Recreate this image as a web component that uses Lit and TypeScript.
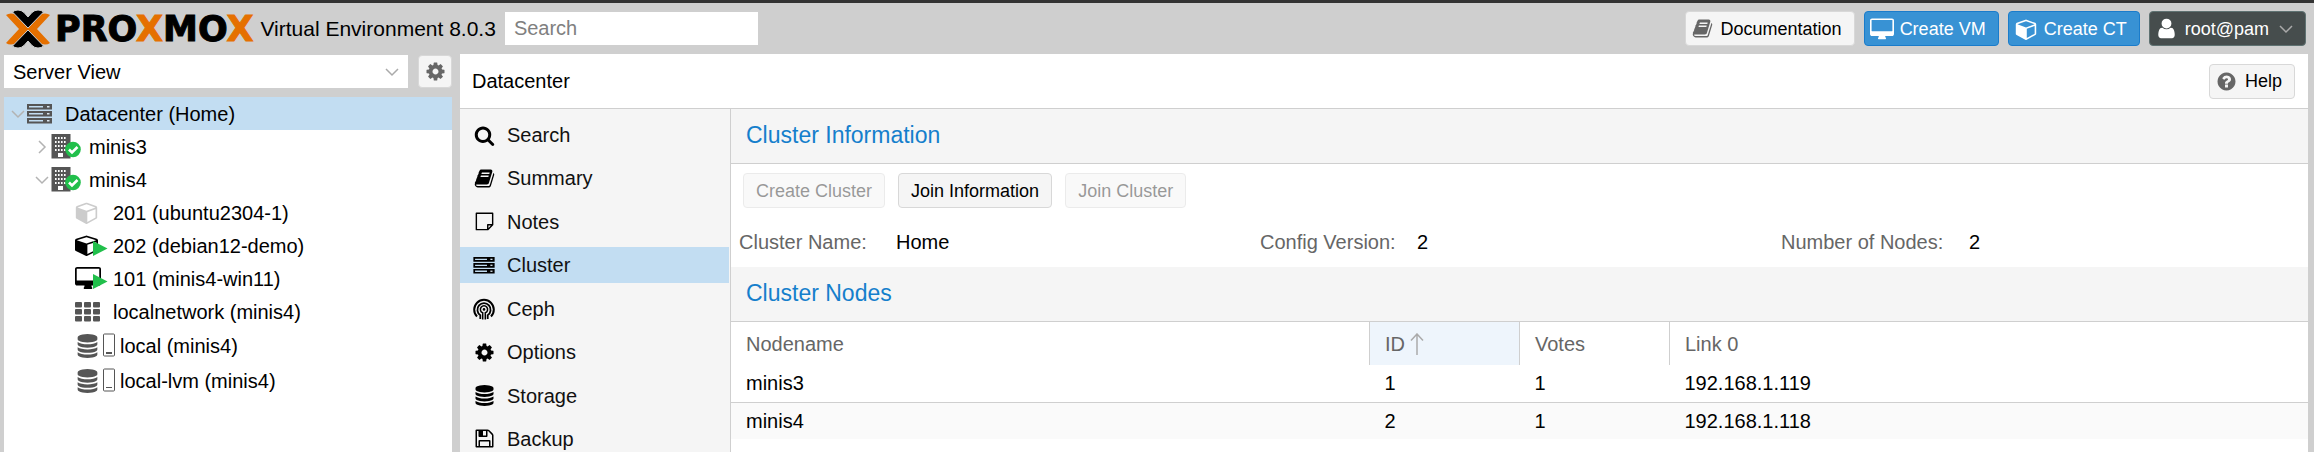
import { LitElement, html, svg, css, nothing, TemplateResult } from "lit";
import { customElement, state } from "lit/decorators.js";
import { classMap } from "lit/directives/class-map.js";

const glyphs = {
  cog: svg`<path d="M1152 896q0-106-75-181t-181-75-181 75-75 181 75 181 181 75 181-75 75-181zm512-109v222q0 12-8 23t-20 13l-185 28q-19 54-39 91 35 50 107 138 10 12 10 25t-9 23q-27 37-99 108t-94 71q-12 0-26-9l-138-108q-44 23-91 38-16 136-29 186-7 28-36 28h-222q-14 0-24.500-8.500t-11.500-21.500l-28-184q-49-16-90-37l-141 107q-10 9-25 9-14 0-25-11-126-114-165-168-7-10-7-23 0-12 8-23 15-21 51-66.500t54-70.500q-27-50-41-99l-183-27q-13-2-21-12.500t-8-23.500v-222q0-12 8-23t19-13l186-28q14-46 39-92-40-57-107-138-10-12-10-24 0-10 9-23 26-36 98.500-107.500t94.500-71.500q13 0 26 10l138 107q44-23 91-38 16-136 29-186 7-28 36-28h222q14 0 24.500 8.500t11.500 21.500l28 184q49 16 90 37l142-107q9-9 24-9 13 0 25 10 129 119 165 170 7 8 7 22 0 12-8 23-15 21-51 66.500t-54 70.500q26 50 41 98l183 28q13 2 21 12.500t8 23.500z"/>`,
  search: svg`<path d="M1216 832q0-185-131.500-316.500t-316.500-131.500-316.500 131.500-131.500 316.500 131.500 316.500 316.500 131.500 316.500-131.500 131.500-316.500zm512 832q0 52-38 90t-90 38q-54 0-90-38l-343-342q-179 124-399 124-143 0-273.500-55.500t-225-150-150-225-55.500-273.500 55.500-273.500 150-225 225-150 273.500-55.500 273.500 55.500 225 150 150 225 55.500 273.500q0 220-124 399l343 343q37 37 37 90z"/>`,
  book: svg`<path d="M1703 478q40 57 18 129l-275 906q-19 64-76.500 107.500t-122.500 43.500h-923q-77 0-148.500-53.500t-99.500-131.500q-24-67-2-127 0-4 3-27t4-37q1-8-3-21.500t-3-19.500q2-11 8-21t16.500-23.500 16.500-23.500q23-38 45-91.500t30-91.500q3-10 .5-30t-.5-28q3-11 17-28t17-23q21-36 42-92t25-90q1-9-2.500-32t.5-28q4-13 22-30.500t22-22.500q19-26 42.500-84.500t27.500-96.500q1-8-3-25.500t-2-26.500q2-8 9-18t18-23 17-21q8-12 16.500-30.500t15-35 16-36 19.500-32 26.500-23.500 36-11.500 47.500 5.500l-1 3q38-9 51-9h761q74 0 114 56t18 130l-274 906q-36 119-71.500 153.500t-128.500 34.500h-869q-27 0-38 15-11 16-1 43 24 70 144 70h923q29 0 56-15.500t35-41.500l300-987q7-22 5-57 38 15 59 43zm-1064 2q-4 13 2 22.500t20 9.500h608q13 0 25.500-9.500t16.500-22.500l21-64q4-13-2-22.500t-20-9.500h-608q-13 0-25.500 9.500t-16.500 22.500zm-83 256q-4 13 2 22.500t20 9.500h608q13 0 25.500-9.500t16.500-22.500l21-64q4-13-2-22.500t-20-9.500h-608q-13 0-25.500 9.500t-16.500 22.500z"/>`,
  help: svg`<path d="M1024 1376v-192q0-14-9-23t-23-9h-192q-14 0-23 9t-9 23v192q0 14 9 23t23 9h192q14 0 23-9t9-23zm256-672q0-88-55.500-163t-138.500-116-170-41q-243 0-371 213-15 24 8 42l132 100q7 6 19 6 16 0 25-12 53-68 86-92 34-24 86-24 48 0 85.500 26t37.500 59q0 38-20 61t-68 45q-63 28-115.500 86.500t-52.500 125.500v36q0 14 9 23t23 9h192q14 0 23-9t9-23q0-19 21.500-49.500t54.500-49.500q32-18 49-28.500t46-35 44.500-48 28-60.500 12.500-81zm384 192q0 209-103 385.500t-279.500 279.500-385.500 103-385.500-103-279.500-279.500-103-385.500 103-385.500 279.500-279.500 385.500-103 385.500 103 279.500 279.500 103 385.500z"/>`,
  user: svg`<path d="M1536 1399q0 109-62.500 187t-150.500 78h-854q-88 0-150.500-78t-62.500-187q0-85 8.500-160.500t31.500-152 58.500-131 94-89 134.500-34.500q131 128 313 128t313-128q76 0 134.500 34.500t94 89 58.500 131 31.500 152 8.500 160.500zm-256-887q0 159-112.500 271.500t-271.500 112.500-271.500-112.500-112.500-271.500 112.500-271.500 271.500-112.500 271.500 112.500 112.500 271.500z"/>`,
  database: svg`<path d="M896 768q237 0 443-43t325-127v170q0 69-103 128t-280 93.500-385 34.500-385-34.500-280-93.500-103-128v-170q119 84 325 127t443 43zm0 768q237 0 443-43t325-127v170q0 69-103 128t-280 93.500-385 34.500-385-34.500-280-93.500-103-128v-170q119 84 325 127t443 43zm0-384q237 0 443-43t325-127v170q0 69-103 128t-280 93.500-385 34.500-385-34.500-280-93.500-103-128v-170q119 84 325 127t443 43zm0-1152q208 0 385 34.500t280 93.500 103 128v128q0 69-103 128t-280 93.500-385 34.500-385-34.500-280-93.500-103-128v-128q0-69 103-128t280-93.500 385-34.500z"/>`,
  floppy: svg`<path d="M512 1536h768v-384h-768v384zm896 0h128v-896q0-14-10-38.500t-20-34.500l-281-281q-10-10-34-20t-39-10v416q0 40-28 68t-68 28h-576q-40 0-68-28t-28-68v-416h-128v1280h128v-416q0-40 28-68t68-28h832q40 0 68 28t28 68v416zm-384-928v-320q0-13-9.500-22.500t-22.500-9.500h-192q-13 0-22.500 9.500t-9.500 22.500v320q0 13 9.500 22.500t22.500 9.500h192q13 0 22.500-9.500t9.500-22.500zm640 32v928q0 40-28 68t-68 28h-1344q-40 0-68-28t-28-68v-1344q0-40 28-68t68-28h928q40 0 88 20t76 48l280 280q28 28 48 76t20 88z"/>`,
  note: svg`<path fill="none" stroke="currentColor" stroke-width="120" stroke-linejoin="round" d="M200 190h1392v980l-420 420h-972zM1592 1170h-420v420"/>`,
};

const cubePath = svg`<path d="M896 1629l640-349v-636l-640 233v752zm-64-865l698-254-698-254-698 254zm832-252v768q0 35-18 65t-49 47l-704 384q-28 16-61 16t-61-16l-704-384q-31-17-49-47t-18-65v-768q0-40 23-73t61-47l704-256q22-8 44-8t44 8l704 256q38 14 61 47t23 73z"/>`;
const desktopPath = svg`<path d="M1728 992v-832q0-13-9.500-22.500t-22.500-9.500h-1600q-13 0-22.500 9.500t-9.500 22.500v832q0 13 9.500 22.500t22.500 9.500h1600q13 0 22.500-9.500t9.500-22.500zm128-832v1088q0 66-47 113t-113 47h-544q0 37 16 77.500t32 71 16 43.500q0 26-19 45t-45 19h-512q-26 0-45-19t-19-45q0-14 16-44t32-70 16-78h-544q-66 0-113-47t-47-113v-1088q0-66 47-113t113-47h1600q66 0 113 47t47 113z"/>`;

const glyph = (name: keyof typeof glyphs, size = 21) =>
  html`<svg class="icon" width=${size} height=${size} viewBox="0 0 1792 1792" aria-hidden="true">${glyphs[name]}</svg>`;

const cube = (w = 23) =>
  html`<svg class="icon" width=${w} height=${w} viewBox="0 0 1664 1792" aria-hidden="true">${cubePath}</svg>`;

const desktop = () =>
  html`<svg class="icon" width="24" height="22" viewBox="-64 0 1920 1700" aria-hidden="true">${desktopPath}</svg>`;

const server = (w: number, h: number) => html`
  <svg class="icon" width=${w} height=${h} viewBox="0 0 25 20" aria-hidden="true">
    ${[0, 7, 14].map(
      (y) => svg`
        <path fill-rule="evenodd" d="M0 ${y}h25v5.500h-25zM2 ${y + 2}v1.500h14v-1.500z"/>
        <rect x="20" y=${y + 2} width="2.500" height="1.500" fill="#d9e6f0"/>`
    )}
  </svg>`;

const ceph = () => html`
  <svg class="icon" width="22" height="22" viewBox="0 0 22 22" aria-hidden="true">
    <g fill="none" stroke="currentColor">
      <path stroke-width="2" d="M4 18.500A9.800 9.800 0 1 1 18 18.500"/>
      <path stroke-width="1.800" d="M7.300 21v-3.800a6.600 6.600 0 1 1 7.400 0v3.800"/>
      <path stroke-width="1.500" d="M9.700 21.500v-6.700a3.600 3.600 0 1 1 2.600 0v6.700"/>
    </g>
    <circle cx="11" cy="11.400" r="1.300"/>
  </svg>`;

const building = () => html`
  <svg class="icon" width="30" height="25" viewBox="0 0 30 25" aria-hidden="true">
    <rect x="0.500" width="19" height="24.500"/>
    ${[3, 7, 11, 15].map((y) =>
      [4, 7, 10, 13].map((x) => svg`<rect x=${x} y=${y} width="1.600" height="2" fill="#fff"/>`)
    )}
    <rect x="7" y="19" width="5" height="4" fill="#fff"/>
    <circle cx="22" cy="15.500" r="7.800" fill="#21bf4b"/>
    <path d="M18 15.500l3 3 5.500-5.500" fill="none" stroke="#fff" stroke-width="2.600"/>
  </svg>`;

const running = (shape: unknown, box: string, w: number, h: number) => html`
  <svg class="icon running" width="34" height="24" viewBox="0 0 34 24" aria-hidden="true">
    <svg width=${w} height=${h} viewBox=${box} preserveAspectRatio="none">${shape}</svg>
    <path d="M18 7l14.500 7.500-14.500 7.500z" fill="#21bf4b"/>
  </svg>`;

const grid = () => html`
  <svg class="icon" width="25" height="20" viewBox="0 0 25 20" aria-hidden="true">
    ${[0, 7, 14].map((y) =>
      [0, 9, 18].map((x) => svg`<rect x=${x} y=${y} width="7" height="5.500" rx="1"/>`)
    )}
  </svg>`;

const drive = (thick: boolean) => html`
  <svg class="icon" width="40" height="26" viewBox="0 0 40 26" aria-hidden="true">
    <svg x="1" y="1" width="23" height="24" viewBox="0 0 1792 1792" preserveAspectRatio="none">${glyphs.database}</svg>
    <rect x="28.500" y="1" width="11" height="22" rx="1" fill="#fff" stroke="currentColor"/>
    <rect x="31" y="19" width="6" height=${thick ? 2 : 1}/>
  </svg>`;

const chevron = (dir: "down" | "right") => html`
  <svg class="chevron" width="14" height="14" viewBox="0 0 14 14" aria-hidden="true">
    <path d=${dir === "down" ? "M1 4l6 6 6-6" : "M4 1l6 6-6 6"} fill="none" stroke="currentColor" stroke-width="1.500"/>
  </svg>`;

interface Node {
  level: number;
  label: string;
  icon: TemplateResult;
  open?: boolean;
  kind?: string;
}

const tree: Node[] = [
  { level: 0, label: "Datacenter (Home)", icon: server(25, 20), open: true },
  { level: 1, label: "minis3", icon: building(), open: false },
  { level: 1, label: "minis4", icon: building(), open: true },
  { level: 2, label: "201 (ubuntu2304-1)", icon: cube(), kind: "stopped" },
  { level: 2, label: "202 (debian12-demo)", icon: running(cubePath, "0 0 1664 1792", 23, 22), kind: "active" },
  { level: 2, label: "101 (minis4-win11)", icon: running(desktopPath, "-64 0 1920 1664", 26, 22), kind: "active" },
  { level: 2, label: "localnetwork (minis4)", icon: grid() },
  { level: 2, label: "local (minis4)", icon: drive(true), kind: "storage" },
  { level: 2, label: "local-lvm (minis4)", icon: drive(false), kind: "storage" },
];

const sections: [string, TemplateResult][] = [
  ["Search", glyph("search")],
  ["Summary", glyph("book")],
  ["Notes", glyph("note")],
  ["Cluster", server(22, 17)],
  ["Ceph", ceph()],
  ["Options", glyph("cog")],
  ["Storage", glyph("database")],
  ["Backup", glyph("floppy")],
];

const summary = [
  { label: "Cluster Name:", value: "Home", wide: false },
  { label: "Config Version:", value: "2", wide: false },
  { label: "Number of Nodes:", value: "2", wide: true },
];

const nodes = [
  ["minis3", "1", "1", "192.168.1.119"],
  ["minis4", "2", "1", "192.168.1.118"],
];

@customElement("app-root")
export class AppRoot extends LitElement {
  @state() private section = "Cluster";
  @state() private selected = "Datacenter (Home)";

  static styles = css`
    :host {
      display: flex;
      flex-direction: column;
      box-sizing: border-box;
      height: 100vh;
      overflow: hidden;
      border-top: 3px solid #333;
      background: #cfcfcf;
      color: #000;
      font: 20px/24px "Liberation Sans", Arial, sans-serif;
    }
    * { box-sizing: border-box; }
    h1, h2, ul, dl, dd { margin: 0; padding: 0; font-size: inherit; font-weight: normal; }
    ul { list-style: none; }
    button, input, select { font: inherit; color: inherit; margin: 0; border-radius: 0; }
    a { color: inherit; text-decoration: none; }
    .icon, .chevron { display: block; flex: none; fill: currentColor; }
    .running { overflow: visible; }

    .top {
      display: flex;
      align-items: center;
      flex: none;
      height: 51px;
      padding: 0 8px 0 6px;
    }
    .mark { display: block; margin-right: 5px; }
    .wordmark {
      font: bold 35px/40px "DejaVu Sans", sans-serif;
      -webkit-text-stroke: 1px currentColor;
    }
    .accent { color: #e57000; }
    .version { margin: 0 9px 0 7px; font-size: 21px; white-space: nowrap; }
    .search {
      width: 253px;
      height: 33px;
      padding: 0 9px;
      border: 0;
      background: #fff;
    }
    .search::placeholder { color: #808080; opacity: 1; }
    .actions { display: flex; gap: 9px; margin-left: auto; }

    .btn {
      display: flex;
      align-items: center;
      gap: 6px;
      height: 35px;
      padding: 0 12px 0 5px;
      border: 1px solid #d8d8d8;
      border-radius: 4px;
      background: #f5f5f5;
      font-size: 18px;
      white-space: nowrap;
    }
    .slot { display: flex; justify-content: center; width: 24px; color: #666; }
    .primary { background: #3892d4; border-color: #1a7ccb; color: #fff; }
    .dark { background: #464d4d; border-color: #5f7272; color: #fff; }
    .primary .slot, .dark .slot { color: #fff; }
    .dark .chevron { margin-left: 4px; color: #aaa; }
    .plain { padding: 0 12px; }
    .plain:disabled { opacity: 0.5; color: #333; }

    .body { display: flex; flex: 1; min-height: 0; gap: 8px; padding: 0 6px 0 4px; }
    .left { display: flex; flex-direction: column; width: 448px; padding-top: 1px; }
    .view { display: flex; gap: 10px; margin-bottom: 9px; }
    .picker { display: grid; flex: 1; align-items: center; }
    .picker > * { grid-area: 1 / 1; }
    .picker select {
      appearance: none;
      width: 100%;
      height: 33px;
      padding: 0 9px;
      border: 0;
      background: #fff;
    }
    .picker .chevron { justify-self: end; margin-right: 9px; color: #aaa; pointer-events: none; }
    .gear { justify-content: center; width: 34px; height: 33px; padding: 0; color: #666; }
    .tree { flex: 1; background: #fff; }
    .row { display: flex; align-items: center; height: 33px; padding-left: 7px; cursor: default; }
    .storage { height: 35px; }
    .on { background: #c2ddf2; }
    .indent { width: 24px; }
    .twisty { width: 16px; color: #b3b3b3; }
    .pic { width: 38px; color: #555; }
    .storage .pic { width: 45px; }
    .stopped .pic { color: #ccc; }
    .active .pic { color: #000; }

    .panel { display: flex; flex-direction: column; flex: 1; min-width: 0; background: #fff; }
    .crumb {
      display: flex;
      align-items: center;
      justify-content: space-between;
      flex: none;
      height: 55px;
      padding: 0 13px 0 12px;
      border-bottom: 1px solid #cfcfcf;
    }
    .split { display: flex; flex: 1; min-height: 0; }
    .nav {
      flex: none;
      width: 271px;
      padding-top: 8px;
      border-right: 1px solid #cfcfcf;
      background: #f5f5f5;
    }
    .items {
      display: grid;
      grid-auto-rows: 36px;
      align-content: space-between;
      height: 340px;
      margin-right: 1px;
    }
    .item { display: flex; align-items: center; gap: 12px; height: 36px; padding-left: 13px; color: #111; }
    .glyph { display: flex; justify-content: center; width: 22px; color: #000; }

    .main { flex: 1; min-width: 0; }
    .title {
      height: 55px;
      padding: 0 15px;
      border-bottom: 1px solid #cfcfcf;
      background: #f5f5f5;
      color: #157fcc;
      font-size: 23px;
      line-height: 52px;
    }
    .bar { display: flex; gap: 13px; padding: 9px 12px; }
    .facts { display: grid; grid-template-columns: repeat(3, 1fr); padding: 13px 6px 13px 8px; }
    .fact { display: flex; }
    dt { flex: none; width: 157px; color: #666; }
    .wide { width: 188px; }
    table { width: 100%; table-layout: fixed; border-collapse: collapse; }
    th, td { padding: 0 15px; text-align: left; font-weight: normal; }
    th { height: 43px; color: #666; border-left: 1px solid #cfcfcf; }
    th:first-child { border-left: 0; }
    td { height: 37px; }
    tbody tr + tr { border-top: 1px solid #cfcfcf; background: #fafafa; }
    .narrow { width: 150px; }
    .sorted { background: #eef5fc; }
    .sort { display: flex; align-items: center; gap: 5px; }
    .sort svg { display: block; }
  `;

  render() {
    return html`
      <header class="top">
        <svg class="mark" width="44" height="38" viewBox="0 0 44 38" role="img" aria-label="Proxmox">
          <g fill="#e57000">
            <path d="M0 5Q2 3.500 5 3.500q4 0 6 2l11 12q1 1.500 0 3L11 32.500q-2 2-6 2-3 0-5-1.500l13-14z"/>
            <path d="M44 5q-2-1.500-5-1.500-4 0-6 2L22 17.500q-1 1.500 0 3L33 32.500q2 2 6 2 3 0 5-1.500L31 19z"/>
          </g>
          <g fill="#000" stroke="#cfcfcf">
            <path d="M6.500 2Q8.500 0 12 0q3.500 0 6 2.500l4 4.500 4-4.500Q28.500 0 32 0q3.500 0 5.500 2L22 18z"/>
            <path d="M6.500 36Q8.500 38 12 38q3.500 0 6-2.500l4-4.500 4 4.500q2.500 2.500 6 2.500 3.500 0 5.500-2L22 20z"/>
          </g>
        </svg>
        <span class="wordmark">PRO<span class="accent">X</span>MO<span class="accent">X</span></span>
        <span class="version">Virtual Environment 8.0.3</span>
        <input class="search" type="search" placeholder="Search" aria-label="Search" />
        <div class="actions">
          <button class="btn"><span class="slot">${glyph("book")}</span>Documentation</button>
          <button class="btn primary"><span class="slot">${desktop()}</span>Create VM</button>
          <button class="btn primary"><span class="slot">${cube(22)}</span>Create CT</button>
          <button class="btn dark"><span class="slot">${glyph("user", 23)}</span>root@pam ${chevron("down")}</button>
        </div>
      </header>
      <div class="body">
        <aside class="left">
          <div class="view">
            <div class="picker">
              <select aria-label="View"><option>Server View</option></select>
              ${chevron("down")}
            </div>
            <button class="btn gear" aria-label="Settings">${glyph("cog")}</button>
          </div>
          <ul class="tree" role="tree">
            ${tree.map(
              (n) => html`
                <li
                  class=${classMap({ row: true, on: n.label === this.selected, [n.kind ?? "group"]: true })}
                  role="treeitem"
                  aria-level=${n.level + 1}
                  aria-expanded=${n.open ?? nothing}
                  @click=${() => (this.selected = n.label)}
                >
                  ${Array.from({ length: n.level }, () => html`<span class="indent"></span>`)}
                  <span class="twisty">${n.open === undefined ? nothing : chevron(n.open ? "down" : "right")}</span>
                  <span class="pic">${n.icon}</span>
                  <span>${n.label}</span>
                </li>`
            )}
          </ul>
        </aside>
        <section class="panel">
          <div class="crumb">
            <h1>Datacenter</h1>
            <button class="btn"><span class="slot">${glyph("help")}</span>Help</button>
          </div>
          <div class="split">
            <nav class="nav">
              <ul class="items">
                ${sections.map(
                  ([name, icon]) => html`
                    <li>
                      <a
                        class=${classMap({ item: true, on: name === this.section })}
                        href="#${name}"
                        @click=${() => (this.section = name)}
                        ><span class="glyph">${icon}</span>${name}</a
                      >
                    </li>`
                )}
              </ul>
            </nav>
            <div class="main">
              <h2 class="title">Cluster Information</h2>
              <div class="bar">
                <button class="btn plain" disabled>Create Cluster</button>
                <button class="btn plain">Join Information</button>
                <button class="btn plain" disabled>Join Cluster</button>
              </div>
              <dl class="facts">
                ${summary.map(
                  (f) => html`
                    <div class="fact">
                      <dt class=${classMap({ wide: f.wide })}>${f.label}</dt>
                      <dd>${f.value}</dd>
                    </div>`
                )}
              </dl>
              <h2 class="title">Cluster Nodes</h2>
              <table>
                <thead>
                  <tr>
                    <th>Nodename</th>
                    <th class="narrow sorted" aria-sort="ascending">
                      <span class="sort">ID
                        <svg width="14" height="22" viewBox="0 0 14 22" aria-hidden="true">
                          <path d="M7 22V1M1 7.500l6-6.500 6 6.500" fill="none" stroke="#aaa" stroke-width="1.500"/>
                        </svg>
                      </span>
                    </th>
                    <th class="narrow">Votes</th>
                    <th>Link 0</th>
                  </tr>
                </thead>
                <tbody>
                  ${nodes.map((r) => html`<tr>${r.map((c) => html`<td>${c}</td>`)}</tr>`)}
                </tbody>
              </table>
            </div>
          </div>
        </section>
      </div>
    `;
  }
}
